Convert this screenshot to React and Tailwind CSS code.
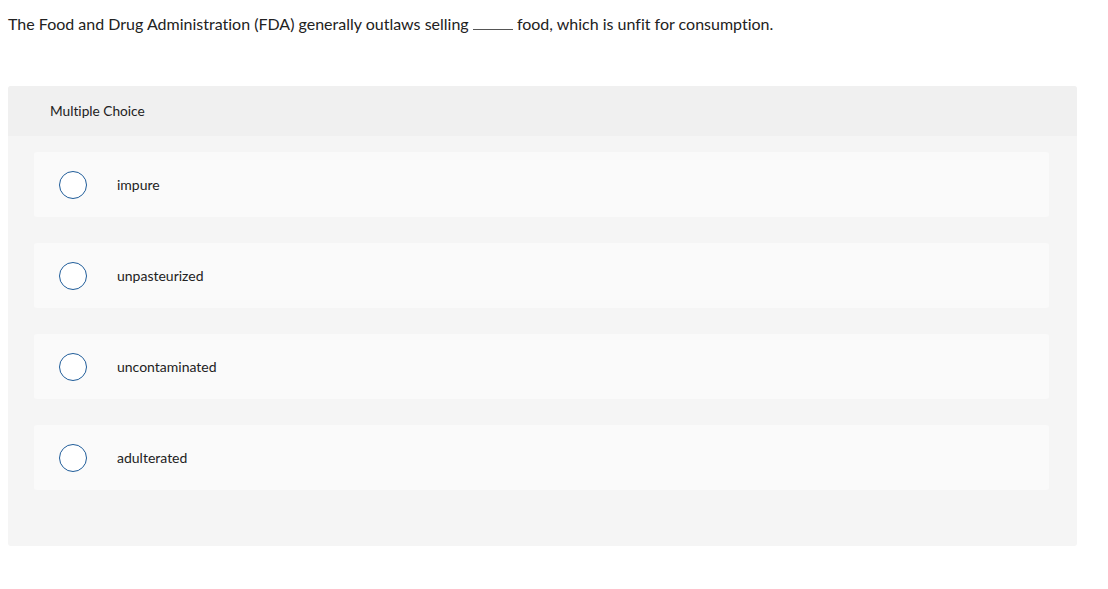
const options = ['impure', 'unpasteurized', 'uncontaminated', 'adulterated']

const App = () => {
  return (
    <div className="min-h-screen bg-white px-2 pt-[13px] font-['Lato','Open_Sans',sans-serif] text-[#222] [font-variant-ligatures:none]">
      <p className="text-[16px] leading-[22px]">
        The Food and Drug Administration (FDA) generally outlaws selling{' '}
        <span className="inline-block w-[40px] border-b border-[#555] align-baseline"></span>{' '}
        food, which is unfit for consumption.
      </p>

      <div className="mt-[51px] w-[1069px] overflow-hidden rounded-[3px] bg-[#f5f5f5]">
        <div className="flex h-[50px] items-center bg-[#f0f0f0] pl-[42px] text-[13.7px] text-[#222]">
          Multiple Choice
        </div>
        <div className="flex flex-col gap-[26px] px-[26px] pt-4 pb-[56px]">
          {options.map((opt) => (
            <div
              key={opt}
              className="flex h-[65px] w-[1015px] items-center rounded-[3px] bg-[#fafafa] pl-[25px]"
            >
              <span className="h-[28px] w-[28px] shrink-0 rounded-full border-[1.5px] border-[#1f5c99] bg-white"></span>
              <span className="ml-[30px] text-[14px] text-[#222]">{opt}</span>
            </div>
          ))}
        </div>
      </div>
    </div>
  )
}

export default App
